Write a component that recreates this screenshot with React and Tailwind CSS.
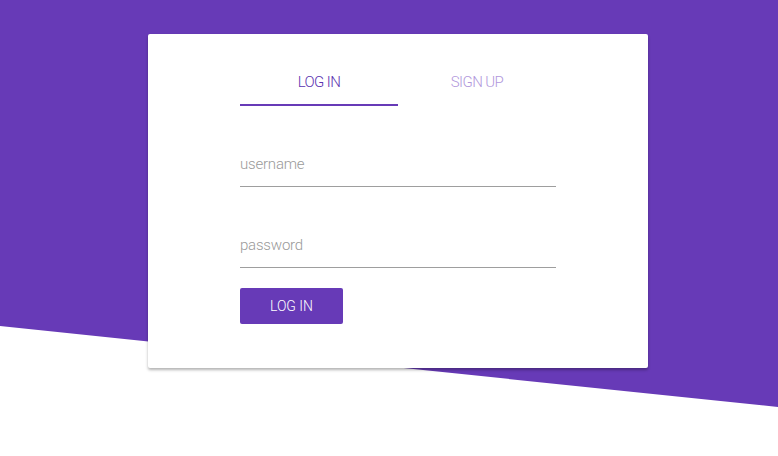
import { useState } from 'react';

const font = { fontFamily: 'Roboto, "Open Sans", sans-serif' };

const Tab = ({ label, active, onClick }) => (
  <button
    onClick={onClick}
    className={`flex-1 h-[48px] pt-[3px] flex items-center justify-center text-[15px] font-light tracking-[-0.6px] uppercase border-b-2 ${
      active ? 'text-[#5a32b0] border-[#673ab7]' : 'text-[#b197dc] border-transparent'
    }`}
  >
    {label}
  </button>
);

const Field = ({ placeholder, type = 'text' }) => (
  <div className="mt-[44px]">
    <input
      type={type}
      placeholder={placeholder}
      className="block w-full h-[37px] pb-[8px] pt-0 px-0 text-[15px] font-light tracking-[-0.2px] text-gray-800 placeholder:text-[#9a9a9a] border-b border-[#9e9e9e] outline-none bg-transparent"
    />
  </div>
);

export default function App() {
  const [tab, setTab] = useState('login');

  return (
    <div className="relative w-[778px] h-[456px] overflow-hidden bg-white" style={font}>
      {/* slanted purple backdrop */}
      <div className="absolute inset-x-0 top-0 h-[408px] bg-[#673ab7] [clip-path:polygon(0_0,100%_0,100%_407px,0_326px)]" />

      <div className="relative pt-[34px] pl-[148px]">
        <div className="w-[500px] bg-white rounded-[2px] shadow-[0_2px_3px_rgba(0,0,0,0.3)] px-[92px] pt-[24px] pb-[44px]">
          {/* Tabs */}
          <div className="flex">
            <Tab label="Log in" active={tab === 'login'} onClick={() => setTab('login')} />
            <Tab label="Sign up" active={tab === 'signup'} onClick={() => setTab('signup')} />
          </div>

          <Field placeholder="username" />
          <Field placeholder="password" type="password" />

          <button className="mt-[20px] w-[103px] h-[36px] rounded-[2px] bg-[#673ab7] text-white text-[14px] font-light uppercase">
            Log in
          </button>
        </div>
      </div>
    </div>
  );
}
